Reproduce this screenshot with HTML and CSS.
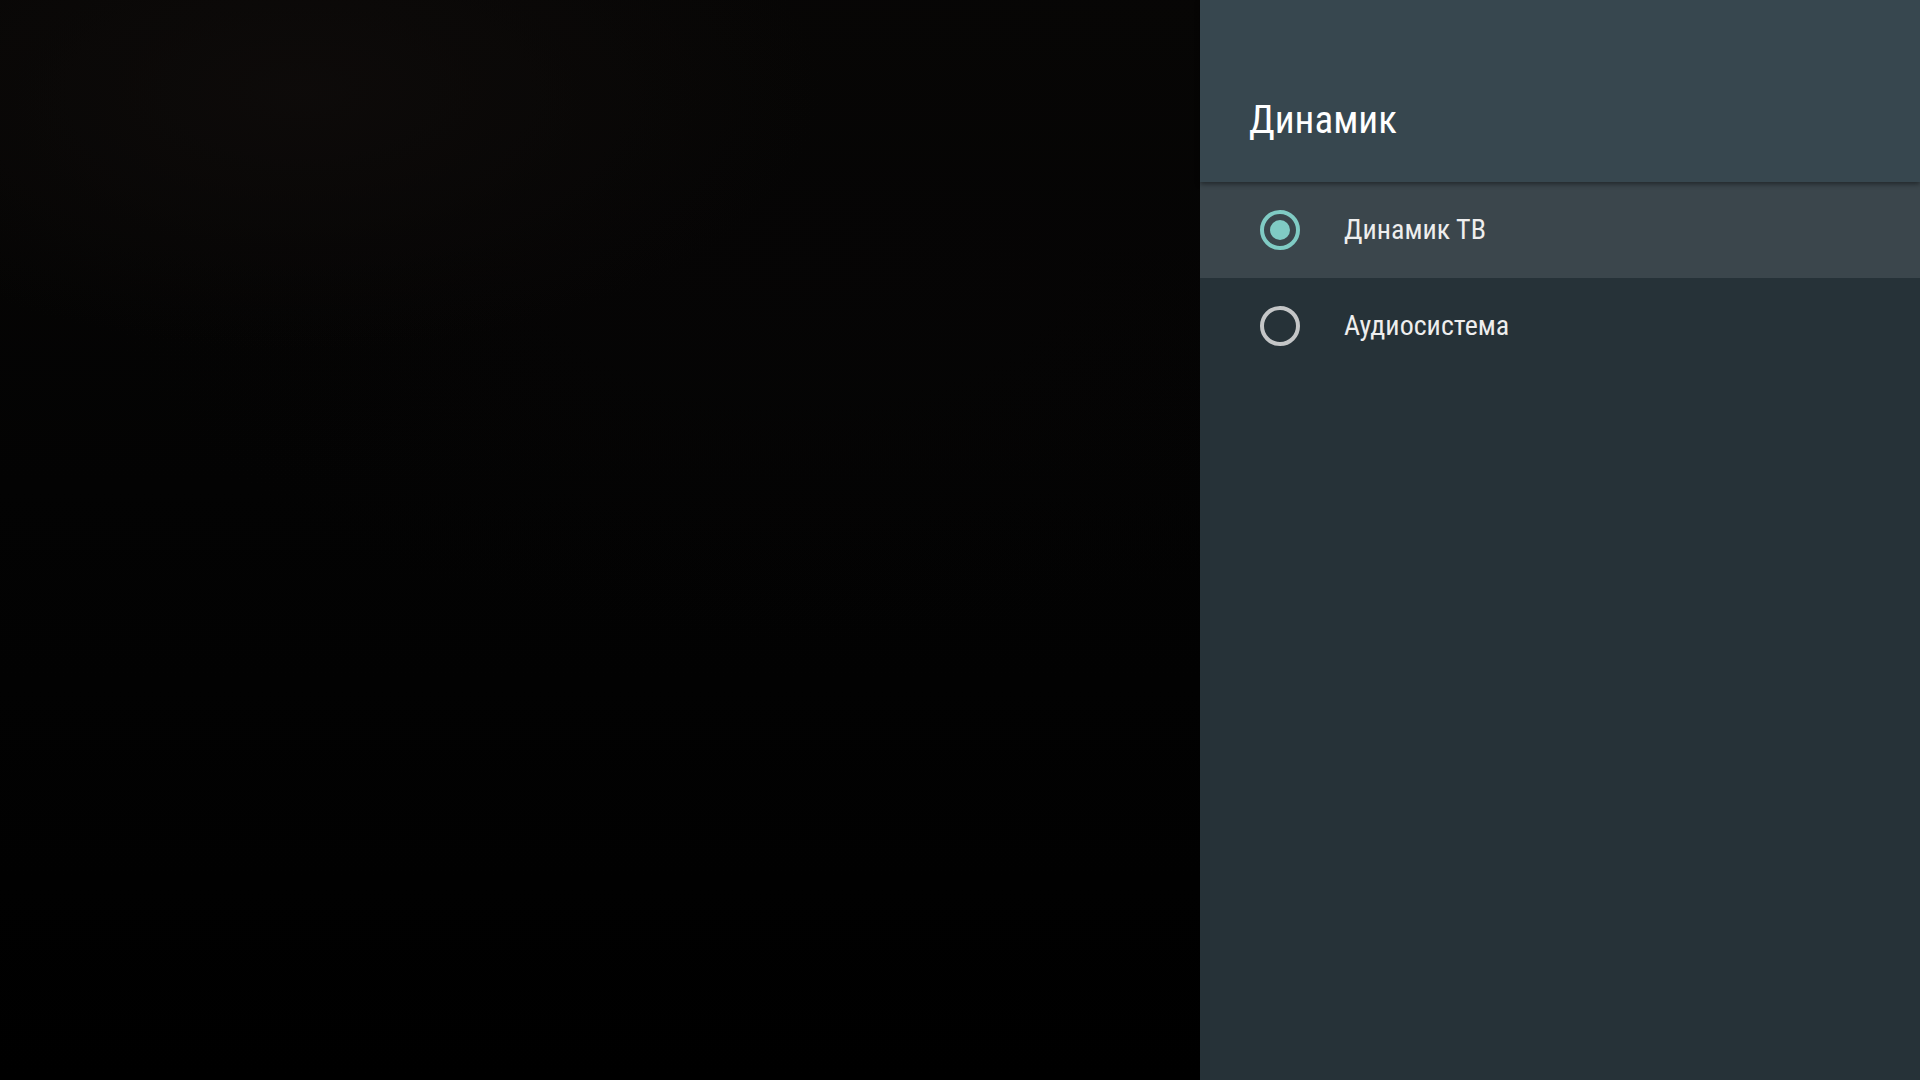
FILE: index.html
```html
<!DOCTYPE html>
<html lang="ru">
<head>
<meta charset="utf-8">
<title>Динамик</title>
<link rel="stylesheet" href="styles.css">
</head>
<body>
<div class="screen">
  <div class="backdrop"></div>
  <aside class="panel">
    <header class="panel-header">
      <h1 class="panel-title">Динамик</h1>
    </header>
    <ul class="options">
      <li class="option option-focused">
        <span class="radio radio-checked"><span class="radio-dot"></span></span>
        <span class="option-label">Динамик ТВ</span>
      </li>
      <li class="option">
        <span class="radio"></span>
        <span class="option-label">Аудиосистема</span>
      </li>
    </ul>
  </aside>
</div>
</body>
</html>
```

FILE: styles.css
```css
html, body {
  margin: 0;
  padding: 0;
  width: 1920px;
  height: 1080px;
  overflow: hidden;
  background: #000;
}

.screen {
  display: flex;
  width: 1920px;
  height: 1080px;
  font-family: "Roboto Condensed", "Roboto", "Noto Sans", sans-serif;
  font-stretch: condensed;
}

.backdrop {
  flex: 0 0 1200px;
  background:
    radial-gradient(ellipse 520px 260px at 300px 90px, rgba(14, 11, 10, 0.9), rgba(0, 0, 0, 0) 100%),
    radial-gradient(ellipse 700px 380px at 800px 260px, rgba(6, 5, 5, 0.8), rgba(0, 0, 0, 0) 100%),
    linear-gradient(180deg, #070605 0%, #030303 45%, #000 100%);
}

.panel {
  flex: 1 1 auto;
  display: flex;
  flex-direction: column;
  background: #263238;
}

.panel-header {
  position: relative;
  z-index: 1;
  height: 182px;
  box-sizing: border-box;
  padding: 97px 0 0 49px;
  background: #37474f;
  box-shadow: 0 2px 5px rgba(0, 0, 0, 0.45);
}

.panel-title {
  margin: 0;
  font-size: 39px;
  line-height: 46px;
  font-weight: 400;
  color: #ffffff;
}

.options {
  list-style: none;
  margin: 0;
  padding: 0;
}

.option {
  display: flex;
  align-items: center;
  height: 96px;
  box-sizing: border-box;
  padding-left: 60px;
}

.option-focused {
  background: #3b464c;
}

.radio {
  box-sizing: border-box;
  width: 40px;
  height: 40px;
  border-radius: 50%;
  border: 4px solid #c4c6c7;
  display: flex;
  align-items: center;
  justify-content: center;
  flex: 0 0 auto;
}

.radio-checked {
  border-color: #80cbc4;
}

.radio-dot {
  width: 20px;
  height: 20px;
  border-radius: 50%;
  background: #80cbc4;
}

.option-label {
  margin-left: 44px;
  font-size: 28px;
  line-height: 40px;
  color: #eeeeee;
}
```
